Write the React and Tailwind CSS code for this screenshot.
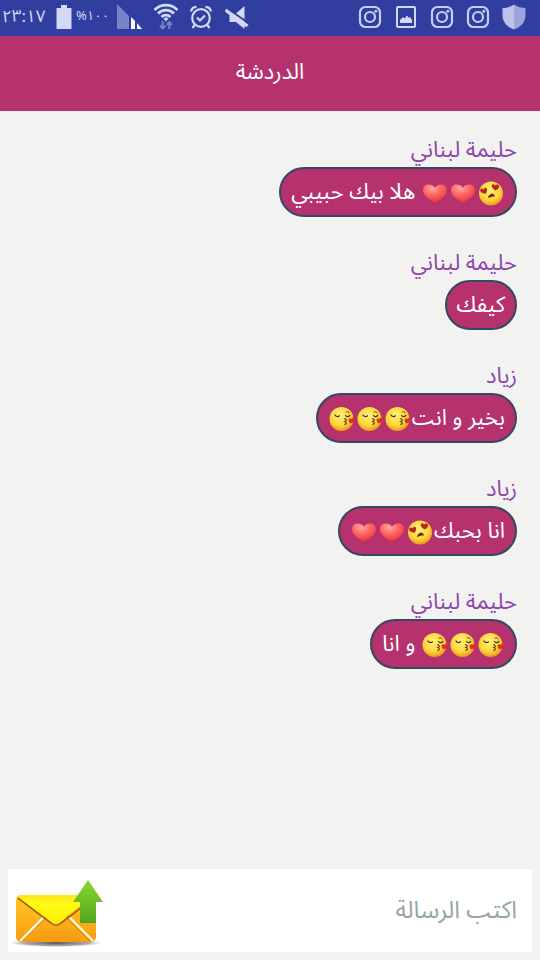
const messages = [
    { id: 1, sender: 'حليمة لبناني', parts: [':love:', ':heart:', ':heart:', ' هلا بيك حبيبي'] },
    { id: 2, sender: 'حليمة لبناني', parts: ['كيفك'] },
    { id: 3, sender: 'زياد', parts: ['بخير و انت', ':kiss:', ':kiss:', ':kiss:'] },
    { id: 4, sender: 'زياد', parts: ['انا بحبك', ':love:', ':heart:', ':heart:'] },
    { id: 5, sender: 'حليمة لبناني', parts: [':kiss:', ':kiss:', ':kiss:', ' و انا'] }
];

const emojiClass = 'inline-block w-7 h-7 align-middle';

function Gradients() {
    return (
        <svg className="absolute w-0 h-0" aria-hidden="true">
            <defs>
                <radialGradient id="face" cx="0.45" cy="0.35" r="0.7">
                    <stop offset="0" stopColor="#fff07a" />
                    <stop offset="0.6" stopColor="#fdd63c" />
                    <stop offset="1" stopColor="#e88a14" />
                </radialGradient>
                <radialGradient id="heart" cx="0.4" cy="0.2" r="0.85">
                    <stop offset="0" stopColor="#ffaaa2" />
                    <stop offset="0.45" stopColor="#ff6462" />
                    <stop offset="1" stopColor="#e5283a" />
                </radialGradient>
            </defs>
        </svg>
    );
}

function HeartEmoji() {
    return (
        <svg viewBox="0 0 28 28" className={emojiClass} role="img" aria-label="❤">
            <path d="M14 24C11 21.500 2 18 2 11C2 7.500 4.500 5.500 7.500 5.500C11 5.500 13 7 14 9C15 7 17 5.500 20.500 5.500C23.500 5.500 26 7.500 26 11C26 18 17 21.500 14 24Z" fill="url(#heart)" />
        </svg>
    );
}

function LoveEmoji() {
    return (
        <svg viewBox="0 0 28 28" className={emojiClass} role="img" aria-label="😍">
            <circle cx="14" cy="14.500" r="12" fill="url(#face)" />
            <path d="M8.500 15C6.300 14.800 3 13.500 3.200 11C3.500 9.200 5.500 9 6.500 10.400C7.200 8.400 9.300 8.200 10 9.700C10.600 11.500 9.500 13.500 8.500 15Z" fill="#b5281c" />
            <path d="M18.500 11.500C16.500 10.300 14 8 14.900 6.100C15.800 4.600 17.600 5.100 18 6.700C19.200 5.100 21.500 5.300 22 7C22.300 9 20.300 10.700 18.500 11.500Z" fill="#b5281c" />
            <path d="M11 19C11.300 16.500 13.300 14.800 15.300 14.500C16.800 15.200 18 16.200 17.800 17.500C15.500 17.300 13.500 18 11 19Z" fill="#5a2e0c" />
        </svg>
    );
}

function KissEmoji() {
    return (
        <svg viewBox="0 0 28 28" className={emojiClass} role="img" aria-label="😘">
            <circle cx="13.500" cy="14" r="12" fill="url(#face)" />
            <g fill="none" stroke="#4a2c10" strokeLinecap="round">
                <path d="M7 10C8 11.800 10 12 11.500 10.800" strokeWidth="1.200" />
                <path d="M17.500 10.500C18.500 12 20.300 12 21.700 10.500" strokeWidth="1.200" />
                <path d="M18 7C19.500 6.300 20.500 6.800 21.500 8" strokeWidth="0.800" />
                <path d="M16.500 13.800C18.600 13.600 18.800 15.800 17 16.500C18.900 17 18.600 19.300 16.700 19.300" strokeWidth="1.100" />
            </g>
            <path d="M22.500 18.500C21 17 20 15.500 20.800 14C21.500 12.800 23 13 23.600 14.100C24.300 12.500 26.500 12.300 27.200 14C27.700 16 25 17.500 22.500 18.500Z" fill="#dc3024" />
        </svg>
    );
}

function MessagePart({ part }) {
    if (part === ':heart:') return <HeartEmoji />;
    if (part === ':love:') return <LoveEmoji />;
    if (part === ':kiss:') return <KissEmoji />;
    return <span>{part}</span>;
}

function InstagramIcon() {
    return (
        <svg viewBox="0 0 24 24" className="w-6 h-6" fill="none" stroke="#c6cdf3" strokeWidth="2.200">
            <rect x="2" y="2" width="20" height="20" rx="5.500" />
            <circle cx="12" cy="12" r="5" />
            <circle cx="17.800" cy="6.300" r="1.500" fill="#c6cdf3" stroke="none" />
        </svg>
    );
}

function StatusBar() {
    return (
        <div dir="ltr" className="flex items-center justify-between h-9 pl-[2px] pr-[14px] pb-[2px] bg-[#303f9f] text-[#d3d8f5]">
            <div className="flex items-center">
                <span className="w-12 text-[17px] leading-8 whitespace-nowrap">٢٣:١٧</span>
                <svg viewBox="0 0 16 24" className="w-4 h-6 ml-[6px]" fill="#d3d8f5">
                    <path d="M5 0H11V3H15.500V24H0.500V3H5Z" />
                </svg>
                <span className="w-8 ml-1 text-[13px] whitespace-nowrap">%١٠٠</span>
                <svg viewBox="0 0 26 26" className="w-[26px] h-[26px] ml-[9px]">
                    <path d="M0 0L12 12V25H0Z" fill="#7782c8" />
                    <path d="M14 13L18 17V25H14Z" fill="#fff" />
                    <path d="M20 19L25 25H20Z" fill="#fff" />
                </svg>
                <svg viewBox="0 0 26 28" className="w-[26px] h-7 ml-[10px]" fill="none" stroke="#d3d8f5" strokeWidth="2.600">
                    <path d="M1.500 7C8 0.500 18 0.500 24.500 7" />
                    <path d="M5 10.500C9.500 6 16.500 6 21 10.500" />
                    <path d="M8.500 14C11 11.500 15 11.500 17.500 14" />
                    <path d="M10.500 15.500L13 18.500L15.500 15.500C14 14.300 12 14.300 10.500 15.500Z" fill="#d3d8f5" stroke="none" />
                    <path d="M9.700 18V25M7 22.500L9.700 25.500L12.400 22.500M16.300 26V20M13.600 22L16.300 19L19 22" stroke="#7782c8" strokeWidth="2" />
                </svg>
                <svg viewBox="0 0 24 26" className="w-6 h-[26px] ml-[10px]" fill="none" stroke="#d3d8f5" strokeWidth="2.200">
                    <circle cx="12" cy="14" r="8.800" />
                    <path d="M8 13.500L11 16.500L16 11.500" />
                    <path d="M2 7.500C2.500 4.500 4.500 3 7.500 2.800M22 7.500C21.500 4.500 19.500 3 16.500 2.800M6 20.500L3.500 24M18 20.500L20.500 24" />
                </svg>
                <svg viewBox="0 0 26 26" className="w-[26px] h-[26px] ml-3">
                    <path d="M19.500 2V25L11 18H4.500V9.500H11Z" fill="#d3d8f5" />
                    <path d="M1 3.500L24 19.500" stroke="#303f9f" strokeWidth="2" />
                    <path d="M0.500 6L22.500 22" stroke="#d3d8f5" strokeWidth="3.400" />
                </svg>
            </div>
            <div className="flex items-center gap-3">
                <InstagramIcon />
                <svg viewBox="0 0 24 24" className="w-6 h-6" fill="none" stroke="#d3d8f5" strokeWidth="2">
                    <rect x="3" y="2" width="18" height="20" rx="1" />
                    <path d="M6 18V15L9 12L10.500 13.500L13 10.500L15 13L16 12L18 15V18Z" fill="#d3d8f5" stroke="none" />
                </svg>
                <InstagramIcon />
                <InstagramIcon />
                <svg viewBox="0 0 24 26" className="w-6 h-[26px]">
                    <path d="M12 0.500C8.500 3 4.500 4 0.500 4V11C0.500 18 5 23 12 25.500Z" fill="#bcc3ec" />
                    <path d="M12 0.500C15.500 3 19.500 4 23.500 4V11C23.500 18 19 23 12 25.500Z" fill="#9ca5dc" />
                </svg>
            </div>
        </div>
    );
}

function EnvelopeIcon() {
    return (
        <svg viewBox="0 0 94 70" className="w-[94px] h-[70px]">
            <defs>
                <linearGradient id="envelope" x1="0" y1="0" x2="0" y2="1">
                    <stop offset="0" stopColor="#ffc928" />
                    <stop offset="1" stopColor="#f99a12" />
                </linearGradient>
                <linearGradient id="flap" x1="0" y1="0" x2="0" y2="1">
                    <stop offset="0" stopColor="#ffe31c" />
                    <stop offset="0.3" stopColor="#fffb14" />
                    <stop offset="1" stopColor="#ffee0c" />
                </linearGradient>
                <linearGradient id="arrow" x1="0" y1="0" x2="0" y2="1">
                    <stop offset="0" stopColor="#8ad62c" />
                    <stop offset="1" stopColor="#4fa51f" />
                </linearGradient>
                <radialGradient id="shadow">
                    <stop offset="0" stopColor="#555" />
                    <stop offset="0.7" stopColor="#888" stopOpacity="0.7" />
                    <stop offset="1" stopColor="#aaa" stopOpacity="0" />
                </radialGradient>
            </defs>
            <ellipse cx="46" cy="63" rx="46" ry="4" fill="url(#shadow)" />
            <rect x="6" y="15" width="80" height="47" rx="5" fill="url(#envelope)" />
            <path d="M10 61L36 36M82 61L57 36" stroke="#c9860c" strokeWidth="3.500" />
            <path d="M10 61L34 37M83 61L59 37" stroke="#fff3c4" strokeWidth="2.500" />
            <path d="M8 18L41 43C44 46 48 46 51 43L84 18" fill="none" stroke="#a0640a" strokeWidth="1.600" />
            <path d="M10 15H83L51 41.500C48 44.500 44 44.500 41 41.500L8 17Z" fill="url(#flap)" />
            <path d="M78 0L93 22H86V43H70V22H63Z" fill="url(#arrow)" />
        </svg>
    );
}

export default function App() {
    return (
        <div dir="rtl" className="flex flex-col min-h-screen bg-[#f2f2f0] font-['Noto_Sans_Arabic','DejaVu_Sans',sans-serif]">
            <Gradients />
            <StatusBar />

            <header className="flex items-center justify-center h-[75px] pb-[2px] bg-[#b5326f]">
                <h1 className="text-[22px] text-white">الدردشة</h1>
            </header>

            {/* Messages */}
            <main className="flex-1 flex flex-col items-start gap-[31px] px-[23px] pt-6">
                {messages.map((message) => (
                    <article key={message.id}>
                        <h2 className="mb-[2px] text-[22px] leading-[30px] text-[#8e44ad]">{message.sender}</h2>
                        <p className="w-fit h-[50px] px-[10px] border-2 border-[#34495e] rounded-[25px] bg-[#b5326f] text-[22px] leading-[46px] text-white whitespace-pre">
                            {message.parts.map((part, index) => (
                                <MessagePart key={index} part={part} />
                            ))}
                        </p>
                    </article>
                ))}
            </main>

            {/* Compose */}
            <form className="flex items-center m-2 h-[83px] bg-white" onSubmit={(e) => e.preventDefault()}>
                <input
                    type="text"
                    aria-label="اكتب الرسالة"
                    placeholder="اكتب الرسالة"
                    className="flex-1 min-w-0 h-full px-[15px] text-2xl text-gray-800 placeholder:text-[#95a5a6] outline-none"
                />
                <button type="submit" aria-label="إرسال" className="pl-[2px] pt-2">
                    <EnvelopeIcon />
                </button>
            </form>
        </div>
    );
}
